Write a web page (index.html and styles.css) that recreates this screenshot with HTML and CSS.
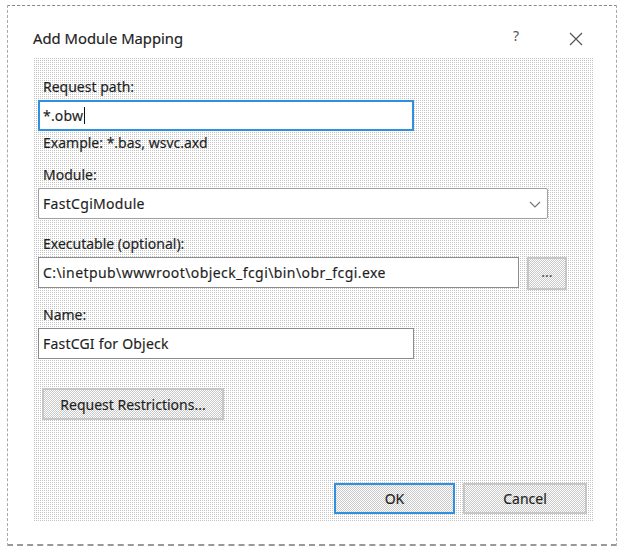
FILE: index.html
```html
<!DOCTYPE html>
<html>
<head>
<meta charset="utf-8">
<link rel="stylesheet" href="styles.css">
</head>
<body>
<div class="frame">
  <div class="titlebar">
    <span class="title">Add Module Mapping</span>
    <span class="help">?</span>
    <svg class="close" width="14" height="14" viewBox="0 0 14 14"><path d="M1 1L13 13M13 1L1 13" stroke="#555" stroke-width="1.2" fill="none"/></svg>
  </div>
  <div class="content">
    <div class="label l-req">Request path:</div>
    <div class="field focus w-short">*.obw<span class="caret"></span></div>
    <div class="label l-ex">Example: *.bas, wsvc.axd</div>
    <div class="label l-mod">Module:</div>
    <div class="field select">
      <span>FastCgiModule</span>
      <svg class="chev" width="12" height="7" viewBox="0 0 12 7"><path d="M1 1L6 6L11 1" stroke="#777" stroke-width="1.2" fill="none"/></svg>
    </div>
    <div class="label l-exe">Executable (optional):</div>
    <div class="row">
      <div class="field w-exe">C:\inetpub\wwwroot\objeck_fcgi\bin\obr_fcgi.exe</div>
      <div class="btn dots">...</div>
    </div>
    <div class="label l-name">Name:</div>
    <div class="field w-short">FastCGI for Objeck</div>
    <div class="btn restr">Request Restrictions...</div>
    <div class="actions">
      <div class="btn ok">OK</div>
      <div class="btn cancel">Cancel</div>
    </div>
  </div>
</div>
</body>
</html>
```
FILE: styles.css
```css
html, body { margin: 0; padding: 0; background: #fff; }
body {
  font-family: "Noto Sans", "Open Sans", sans-serif;
  font-size: 14px;
  color: #1e1e1e;
  width: 626px;
  height: 555px;
  overflow: hidden;
  -webkit-text-stroke: 0.15px #1e1e1e;
}
.frame {
  margin: 5px 0 0 7px;
  width: 610px;
  height: 541px;
  border: 1px dashed #a8a8a8;
  border-top-color: #8a8a8a;
  border-bottom: 2px dashed #999;
  box-sizing: border-box;
  display: flex;
  flex-direction: column;
}
.titlebar {
  height: 52px;
  display: flex;
  align-items: center;
  padding: 0 0 0 25px;
  position: relative;
}
.title { font-size: 14.8px; color: #222; margin-top: 11px; }
.help { position: absolute; left: 505px; top: 20px; font-size: 14px; color: #555; -webkit-text-stroke: 0; }
.close { position: absolute; left: 561px; top: 26px; }
.content {
  margin-left: 25px;
  width: 561px;
  height: 463px;
  box-sizing: border-box;
  padding: 0 7px 0 5px;
  background-image: repeating-conic-gradient(#c4c4c4 0 25%, #fff 0 100%);
  background-size: 2px 2px;
  display: flex;
  flex-direction: column;
}
.label { height: 18px; line-height: 18px; padding-left: 5px; white-space: nowrap; }
.l-req { margin-top: 20px; }
.l-ex { margin-top: 3px; }
.l-mod { margin-top: 14px; }
.l-exe { margin-top: 16px; }
.l-name { margin-top: 16px; }
.field {
  box-sizing: border-box;
  height: 31px;
  background: #fff;
  border: 1px solid #8c8c8c;
  padding: 0 0 0 4px;
  display: flex;
  align-items: center;
  white-space: nowrap;
  margin-top: 4px;
}
.focus { border: 2px solid #2f8fe0; padding-left: 3px; }
.caret { display: inline-block; width: 1px; height: 17px; background: #111; margin-left: 1px; }
.w-short { width: 376px; letter-spacing: 0.2px; }
.select { width: 510px; justify-content: space-between; padding-right: 6px; border-color: #a0a0a0; border-radius: 2px; letter-spacing: 0.3px; }
.chev { margin-top: 1px; }
.row { display: flex; align-items: flex-start; gap: 8px; margin-top: 4px; }
.row .field { margin-top: 0; }
.w-exe { width: 481px; letter-spacing: 0.42px; }
.btn {
  box-sizing: border-box;
  border: 2px solid #c6c6c6;
  background-image: repeating-conic-gradient(#c8c8c8 0 25%, #fff 0 50%);
  background-size: 2px 2px;
  display: flex;
  align-items: center;
  justify-content: center;
  white-space: nowrap;
}
.dots { width: 40px; height: 33px; color: #555; padding-bottom: 4px; }
.restr { width: 182px; height: 32px; margin-top: 29px; margin-left: 4px; }
.actions { margin-top: auto; margin-bottom: 7px; display: flex; justify-content: flex-end; gap: 8px; }
.ok { width: 121px; height: 31px; border-color: #2f8fe0; }
.cancel { width: 124px; height: 31px; }
```
